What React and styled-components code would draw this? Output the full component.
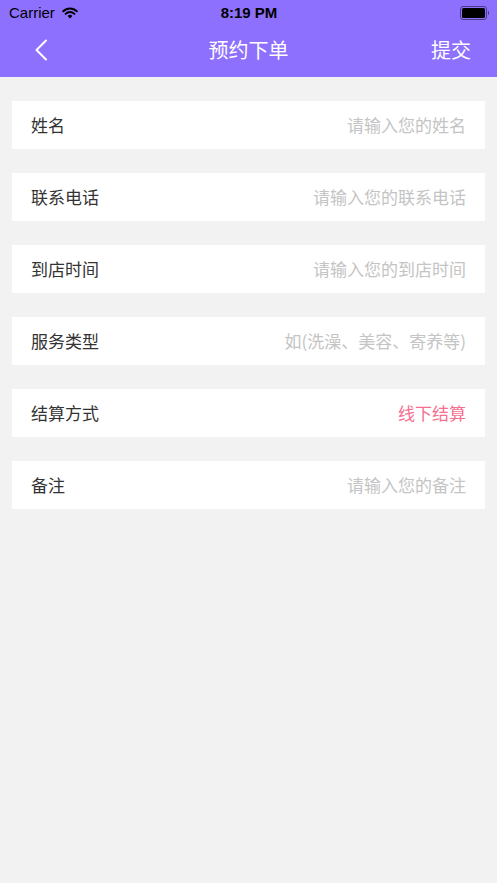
import React from 'react'
import styled, { createGlobalStyle } from 'styled-components'

const Global = createGlobalStyle`
  html, body { margin: 0; padding: 0; background: #f2f2f2; }
  body { font-family: "Noto Sans CJK SC", "Liberation Sans", sans-serif; }
`

const Page = styled.div`
  width: 497px;
  min-height: 883px;
  background: #f2f2f2;
`

const Header = styled.div`
  background: #8e70fe;
  height: 77px;
  display: flex;
  flex-direction: column;
`

const StatusBar = styled.div`
  height: 25px;
  display: grid;
  grid-template-columns: 1fr auto 1fr;
  align-items: center;
  padding: 0 8px 0 9px;
  font-family: "Liberation Sans", Arial, sans-serif;
  font-size: 15px;
  color: #000;
`

const Carrier = styled.div`
  display: flex;
  align-items: center;
  gap: 6px;
`

const Time = styled.div`
  font-weight: 600;
`

const Battery = styled.div`
  justify-self: end;
  display: flex;
  align-items: center;
  gap: 1px;
`

const BatteryBody = styled.div`
  width: 23px;
  height: 10px;
  border: 1.5px solid #4b3a8a;
  border-radius: 3px;
  padding: 1px;
  box-sizing: content-box;
  &::after {
    content: '';
    display: block;
    width: 100%;
    height: 100%;
    background: #000;
    border-radius: 1.5px;
  }
`

const BatteryNub = styled.div`
  width: 1.5px;
  height: 4px;
  background: #4b3a8a;
  border-radius: 0 1px 1px 0;
`

const NavBar = styled.div`
  flex: 1;
  display: grid;
  grid-template-columns: 80px 1fr 80px;
  align-items: center;
  padding: 0 26px 2px 34px;
  color: #fff;
  font-size: 20px;
  line-height: 1;
`

const Back = styled.div`
  display: flex;
  align-items: center;
  margin-top: -1px;
`

const Title = styled.div`
  text-align: center;
  margin-left: -8px;
`

const Submit = styled.div`
  text-align: right;
`

const List = styled.div`
  display: flex;
  flex-direction: column;
  gap: 24px;
  padding: 24px 12px;
`

const Row = styled.div`
  height: 48px;
  background: #fff;
  display: flex;
  align-items: center;
  justify-content: space-between;
  padding: 0 19px 2px 19px;
  box-sizing: border-box;
  font-size: 17px;
  line-height: 1;
`

const Label = styled.div`
  color: #333;
`

const Value = styled.div`
  color: ${p => (p.$accent ? '#f5708f' : '#c4c4c4')};
`

const rows = [
  { label: '姓名', value: '请输入您的姓名' },
  { label: '联系电话', value: '请输入您的联系电话' },
  { label: '到店时间', value: '请输入您的到店时间' },
  { label: '服务类型', value: '如(洗澡、美容、寄养等)' },
  { label: '结算方式', value: '线下结算', accent: true },
  { label: '备注', value: '请输入您的备注' },
]

const Wifi = () => (
  <svg width="18" height="13" viewBox="0 0 18 13">
    <path d="M9 12.5 L6.6 9.9 A3.4 3.4 0 0 1 11.4 9.9 Z" fill="#000" />
    <path d="M4.6 7.9 A6.2 6.2 0 0 1 13.4 7.9" stroke="#000" strokeWidth="2" fill="none" strokeLinecap="round" />
    <path d="M2.2 5.3 A9.6 9.6 0 0 1 15.8 5.3" stroke="#000" strokeWidth="2" fill="none" strokeLinecap="round" />
  </svg>
)

export default function App() {
  return (
    <Page>
      <Global />
      <Header>
        <StatusBar>
          <Carrier>
            Carrier
            <Wifi />
          </Carrier>
          <Time>8:19 PM</Time>
          <Battery>
            <BatteryBody />
            <BatteryNub />
          </Battery>
        </StatusBar>
        <NavBar>
          <Back>
            <svg width="14" height="22" viewBox="0 0 14 22">
              <path d="M12 1.5 L2.5 11 L12 20.5" stroke="#fff" strokeWidth="2" fill="none" strokeLinecap="round" strokeLinejoin="round" />
            </svg>
          </Back>
          <Title>预约下单</Title>
          <Submit>提交</Submit>
        </NavBar>
      </Header>
      <List>
        {rows.map(r => (
          <Row key={r.label}>
            <Label>{r.label}</Label>
            <Value $accent={r.accent}>{r.value}</Value>
          </Row>
        ))}
      </List>
    </Page>
  )
}
